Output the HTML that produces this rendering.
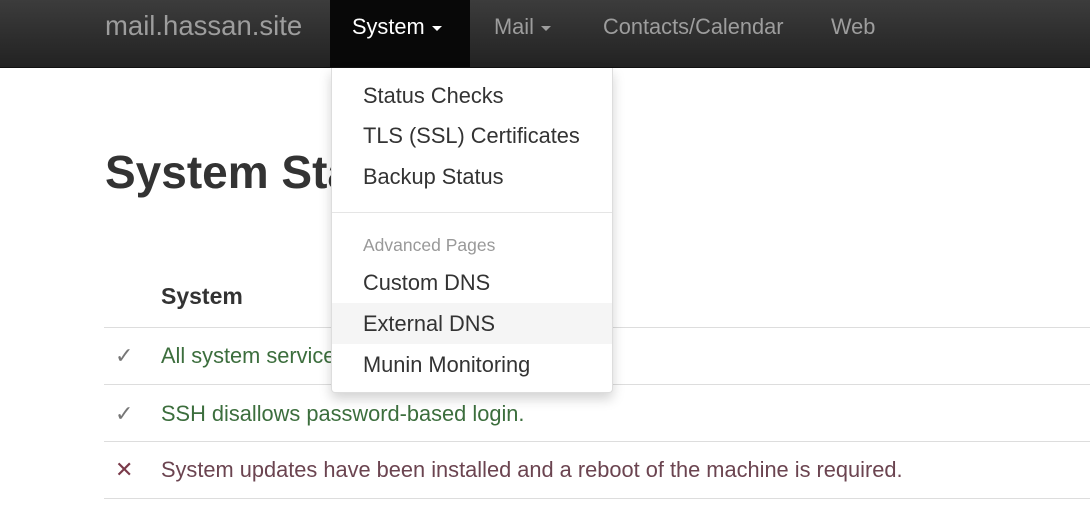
<!DOCTYPE html>
<html><head><meta charset="utf-8"><style>
body{margin:0;width:1090px;height:518px;overflow:hidden;background:#fff;font-family:"Liberation Sans",Arial,sans-serif;position:relative}
.nav{position:absolute;left:0;top:0;width:1090px;height:67px;background:linear-gradient(#3c3c3c,#222);border-bottom:1px solid #111}
.nav span{position:absolute;top:0;line-height:54px;font-size:21.8px;color:#9d9d9d}
.act{position:absolute;left:330px;top:0;width:140px;height:67px;background:#080808}
.caret{display:inline-block;width:0;height:0;border-left:5px solid transparent;border-right:5px solid transparent;border-top:5px solid currentColor;vertical-align:middle;margin-left:7px}
h1{position:absolute;left:105px;top:145px;margin:0;font-size:46px;font-weight:bold;color:#333}
.th{position:absolute;left:161px;top:283px;font-size:23px;font-weight:bold;color:#333}
.line{position:absolute;left:104px;width:986px;height:1px;background:#ddd}
.row{position:absolute;left:115px;font-size:21.8px}
.row b{font-weight:normal;display:inline-block;width:46px}
.dd{position:absolute;left:331px;top:68px;width:280px;height:324px;background:#fff;border:1px solid #ddd;border-top:none;border-radius:0 0 4px 4px;box-shadow:0 6px 12px rgba(0,0,0,.175)}
.dd div{position:absolute;left:31px;font-size:21.8px;color:#333}
</style></head><body>
<div class="nav">
<div class="act"></div>
<span style="left:105px;font-size:27.5px;line-height:52px">mail.hassan.site</span>
<span style="left:352px;color:#fff">System<i class="caret"></i></span>
<span style="left:494px">Mail<i class="caret"></i></span>
<span style="left:603px">Contacts/Calendar</span>
<span style="left:831px">Web</span>
</div>
<h1>System Status Checks</h1>
<div class="th">System</div>
<div class="line" style="top:327px"></div>
<div class="row" style="top:343px;color:#3c6e3d"><b style="color:#777">✓</b>All system services are running.</div>
<div class="line" style="top:384px"></div>
<div class="row" style="top:401px;color:#3c6e3d"><b style="color:#777">✓</b>SSH disallows password-based login.</div>
<div class="line" style="top:441px"></div>
<div class="row" style="top:457px;color:#6b4450"><b style="color:#7a3a4a">✕</b>System updates have been installed and a reboot of the machine is required.</div>
<div class="line" style="top:498px"></div>
<div class="dd">
<div style="top:15px">Status Checks</div>
<div style="top:55px">TLS (SSL) Certificates</div>
<div style="top:96px">Backup Status</div>
<div style="left:0;top:144px;width:280px;height:1px;background:#e5e5e5"></div>
<div style="top:167px;font-size:17.5px;color:#999">Advanced Pages</div>
<div style="top:202px">Custom DNS</div>
<div style="left:0;top:235px;width:280px;height:41px;background:#f5f5f5"></div>
<div style="top:243px">External DNS</div>
<div style="top:284px">Munin Monitoring</div>
</div>
</body></html>
